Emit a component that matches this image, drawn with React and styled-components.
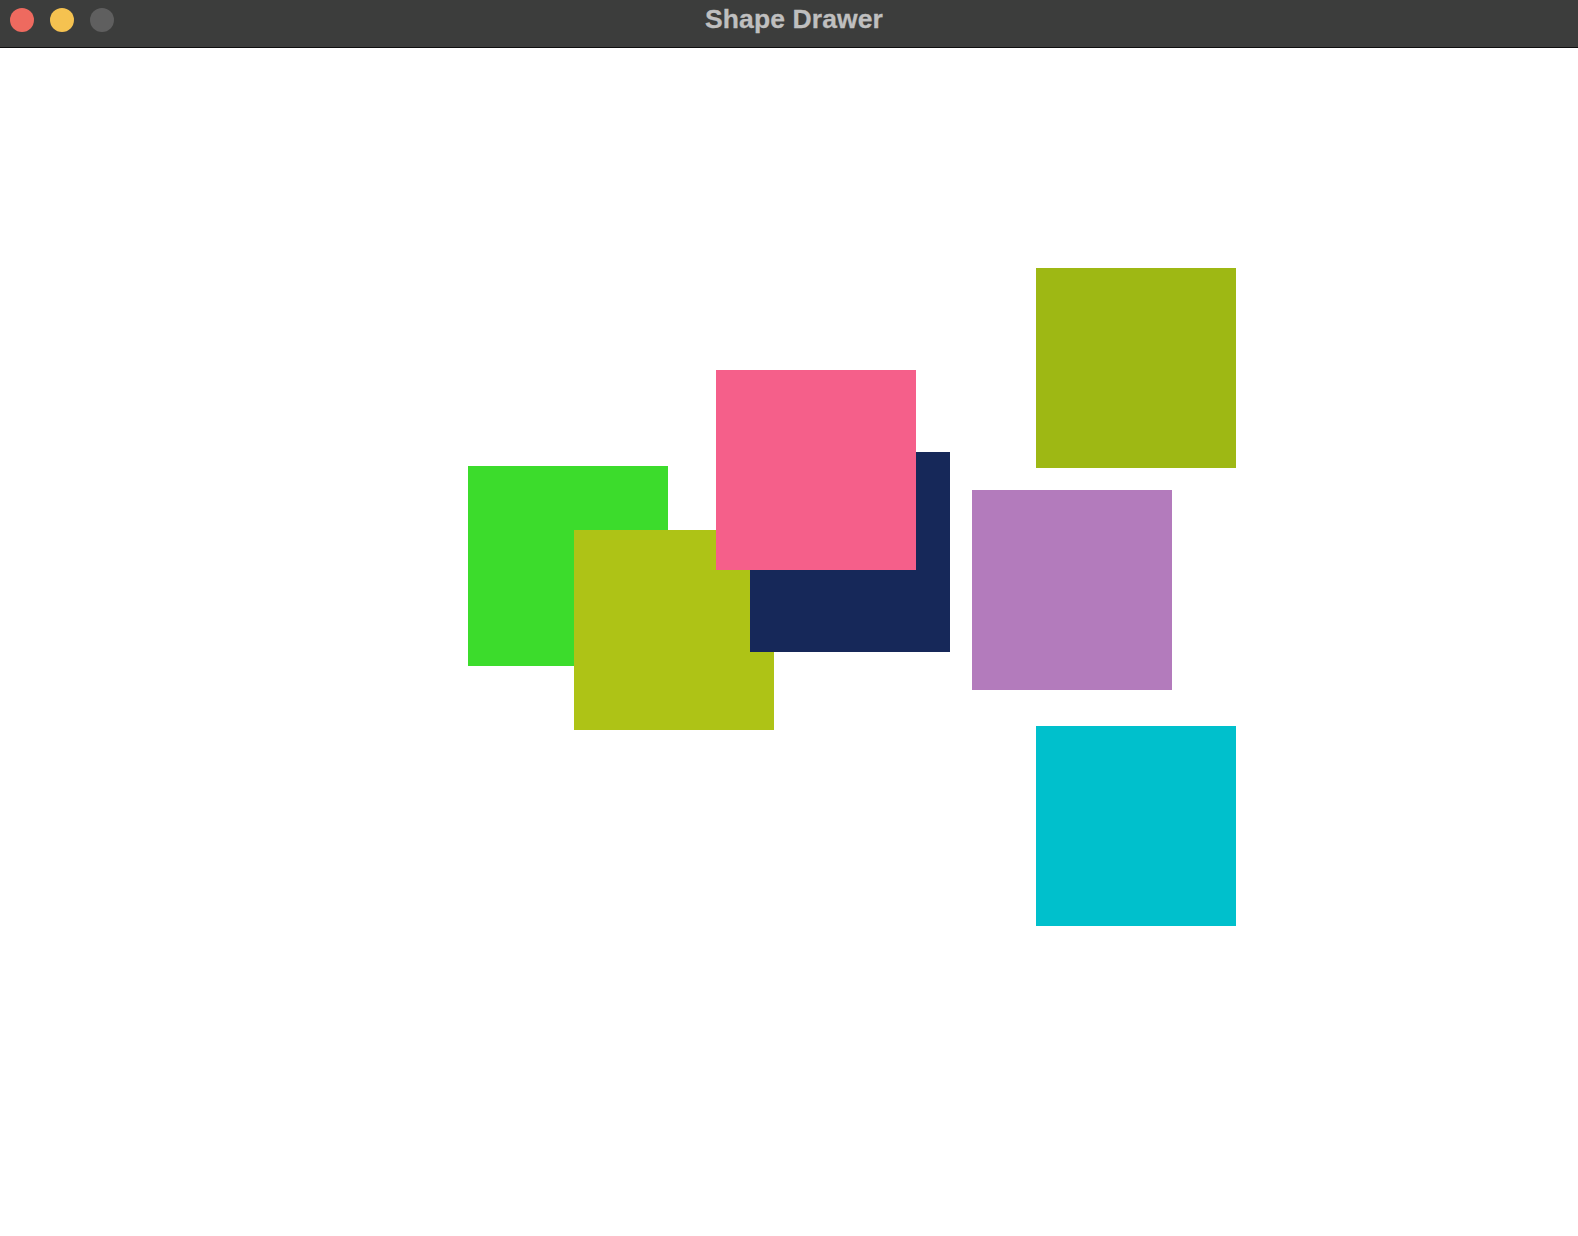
import React from "react"
import styled, { createGlobalStyle } from "styled-components"

const GlobalStyle = createGlobalStyle`
  html, body {
    margin: 0;
    padding: 0;
    background: #ffffff;
  }
  body {
    font-family: "Liberation Sans", Arial, sans-serif;
  }
`

const Janela = styled.div`
  width: 1578px;
  height: 1236px;
  display: flex;
  flex-direction: column;
  overflow: hidden;
`

const BarraTitulo = styled.div`
  position: relative;
  height: 47px;
  flex-shrink: 0;
  background: #3c3d3c;
  border-bottom: 1.5px solid #0f0f0f;
  display: flex;
  align-items: center;
  justify-content: center;
`

const Semaforo = styled.div`
  position: absolute;
  left: 10px;
  top: 8px;
  display: flex;
  gap: 16px;
`

const Bolinha = styled.span`
  width: 24px;
  height: 24px;
  border-radius: 50%;
  background: ${(p) => p.cor};
`

const Titulo = styled.h1`
  margin: 0;
  padding-left: 10px;
  margin-top: -8px;
  font-family: "Liberation Sans", Arial, sans-serif;
  font-weight: bold;
  font-size: 26.5px;
  color: #bfbfbf;
  letter-spacing: 0.1px;
  -webkit-text-stroke: 0.3px #bfbfbf;
`

const Tela = styled.div`
  position: relative;
  flex: 1;
  background: #ffffff;
`

const Quadrado = styled.div`
  position: absolute;
  width: 200px;
  height: 200px;
  left: ${(p) => p.x}px;
  top: ${(p) => p.y}px;
  background: ${(p) => p.cor};
`

// posicoes em coordenadas da pagina, o topo da tela fica em 48.5
const TOPO = 48.5

const formas = [
  { x: 468, y: 466, cor: "#3cdc2c" },
  { x: 574, y: 530, cor: "#aec316" },
  { x: 750, y: 452, cor: "#162859" },
  { x: 716, y: 370, cor: "#f55f8a" },
  { x: 1036, y: 268, cor: "#9eb814" },
  { x: 972, y: 490, cor: "#b37bbc" },
  { x: 1036, y: 726, cor: "#00c0cc" },
]

export default function App() {
  return (
    <>
      <GlobalStyle />
      <Janela>
        <BarraTitulo>
          <Semaforo>
            <Bolinha cor="#ee6a5f" />
            <Bolinha cor="#f5c250" />
            <Bolinha cor="#5f5f5f" />
          </Semaforo>
          <Titulo>Shape Drawer</Titulo>
        </BarraTitulo>
        <Tela>
          {formas.map((f, i) => (
            <Quadrado key={i} x={f.x} y={f.y - TOPO} cor={f.cor} />
          ))}
        </Tela>
      </Janela>
    </>
  )
}
